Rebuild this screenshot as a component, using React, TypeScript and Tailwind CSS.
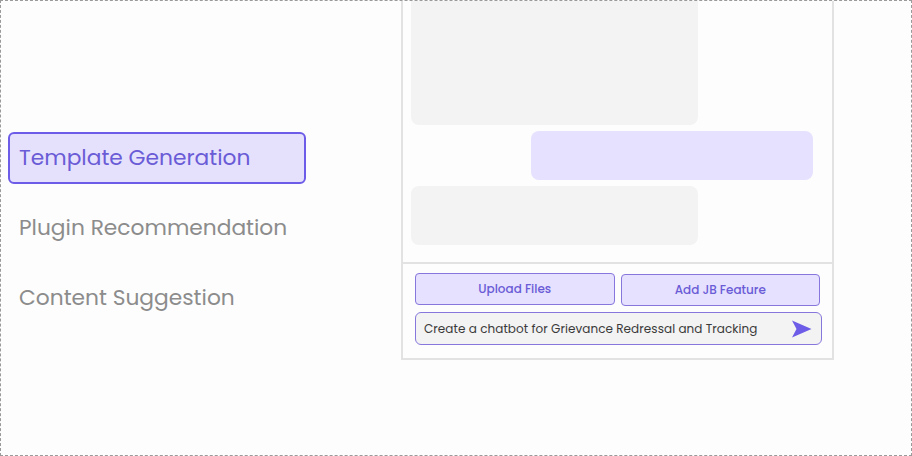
import React from "react";

const font = { fontFamily: '"Poppins", Inter, "Noto Sans", sans-serif' };

export default function App() {
  return (
    <div
      className="w-[912px] h-[456px] border border-dashed border-[#9a9a9a] bg-[#fdfdfd] flex overflow-hidden"
      style={font}
    >
      <div className="w-[400px] flex flex-col pt-[131px] pl-[7px] gap-[18px]">
        <div className="w-[298px] h-[52px] rounded-[6px] border-2 border-[#6c5ce7] bg-[#e5e1fd] flex items-center pl-[9px] pt-[1px] text-[21.75px] text-[#6a5bd6]">
          Template Generation
        </div>
        <div className="h-[52px] flex items-center pl-[11px] pt-[1px] text-[21.75px] text-[#8c8c8c]">
          Plugin Recommendation
        </div>
        <div className="h-[52px] flex items-center pl-[11px] text-[21.75px] text-[#8c8c8c]">
          Content Suggestion
        </div>
      </div>
      <div className="w-[433px] h-[359px] border-x-2 border-b-2 border-[#e2e2e2] flex flex-col">
        <div className="flex flex-col h-[261px]">
          <div className="ml-[8px] w-[287px] h-[124px] rounded-b-[8px] bg-[#f3f3f3]" />
          <div className="mt-[6px] ml-[128px] w-[282px] h-[49px] rounded-[8px] bg-[#e5e1fe]" />
          <div className="mt-[6px] ml-[8px] w-[287px] h-[59px] rounded-[8px] bg-[#f3f3f3]" />
        </div>
        <div className="border-t-2 border-[#e2e2e2] flex-1 flex flex-col px-[12px] pt-[9px]">
          <div className="flex gap-[6px] items-start">
            <div className="w-[201px] h-[32px] rounded-[4px] border border-[#8577dc] bg-[#e5e1fe] flex items-center justify-center text-[12px] font-medium text-[#6a5bd6]">
              Upload Files
            </div>
            <div className="mt-[1px] w-[201px] h-[32px] rounded-[4px] border border-[#8577dc] bg-[#e5e1fe] flex items-center justify-center text-[12px] font-medium text-[#6a5bd6]">
              Add JB Feature
            </div>
          </div>
          <div className="mt-[6px] w-[407px] h-[33px] rounded-[6px] border border-[#8577dc] bg-[#f3f3f3] flex items-center justify-between pl-[8px] pr-[9px]">
            <span className="text-[12px] tracking-[0.06px] text-[#3a3a3a]">
              Create a chatbot for Grievance Redressal and Tracking
            </span>
            <svg width="21" height="18" viewBox="0 0 21 18">
              <path d="M1 0.5 L20.5 9 L1 17.5 L5.5 9 Z" fill="#6c5ce7" />
            </svg>
          </div>
        </div>
      </div>
    </div>
  );
}
